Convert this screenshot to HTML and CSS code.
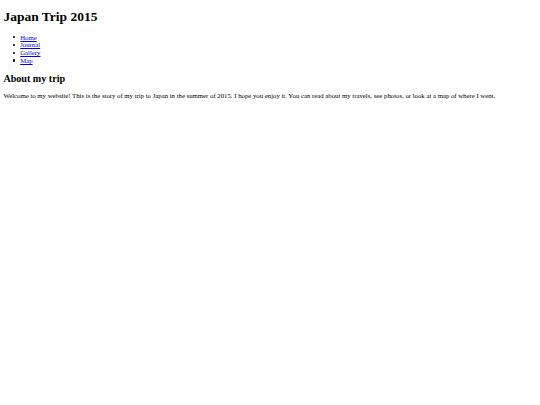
FILE: index.html
```html
<!DOCTYPE html>
<html>
<head>
<meta charset="utf-8">
<title>Japan Trip 2015</title>
<link rel="stylesheet" href="styles.css">
</head>
<body class="page">
<h1 class="site-title">Japan Trip 2015</h1>
<ul class="nav">
<li class="nav-item"><a class="nav-link" href="#">Home</a></li>
<li class="nav-item"><a class="nav-link" href="#">Journal</a></li>
<li class="nav-item"><a class="nav-link" href="#">Gallery</a></li>
<li class="nav-item"><a class="nav-link" href="#">Map</a></li>
</ul>
<h2 class="section-title">About my trip</h2>
<p class="intro">Welcome to my website! This is the story of my trip to Japan in the summer of 2015. I hope you enjoy it. You can read about my travels, see photos, or look at a map of where I went.</p>
</body>
</html>
```
FILE: styles.css
```css
html {
  background: #fff;
}
.page {
  margin: 3.375px;
  font-family: "Liberation Serif", "Times New Roman", serif;
  font-size: 6.75px;
  line-height: 7.76px;
  color: #000;
}
.site-title {
  font-size: 13.5px;
  line-height: 15.5px;
  font-weight: bold;
  margin: 5.8px 0 9.045px;
}
.nav {
  margin: 6.75px 0;
  padding-left: 16.875px;
  list-style: none;
}
.nav-item::before {
  content: "";
  display: inline-block;
  width: 2.2px;
  height: 2.2px;
  border-radius: 50%;
  background: #000;
  margin-left: -7.6px;
  margin-right: 5.4px;
  vertical-align: 1.4px;
}
.nav-link {
  color: #0000ee;
  text-decoration: underline;
}
.section-title {
  font-size: 10.125px;
  line-height: 11.64px;
  font-weight: bold;
  margin: 8.4px 0 7.6px;
}
.intro {
  margin: 6.75px 0;
}
```
